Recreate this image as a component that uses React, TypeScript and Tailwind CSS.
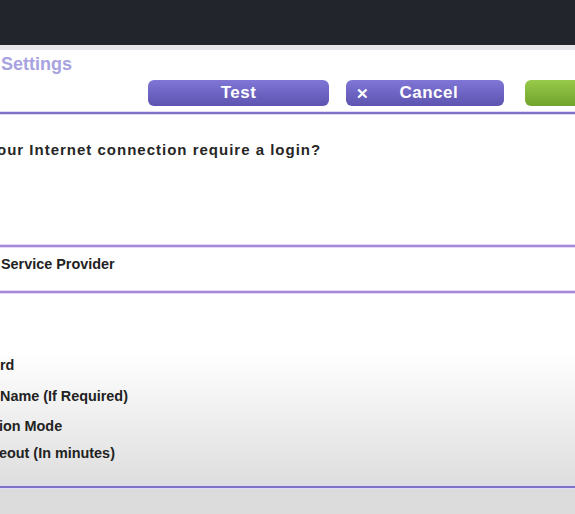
const font = { fontFamily: '"Liberation Sans", Arial, sans-serif' };

function Divider({ tone }: { tone: "dark" | "light" }) {
  return (
    <div className="flex flex-col">
      <div className="h-px bg-[#e4d9f4]" />
      <div className={tone === "dark" ? "h-[2px] bg-[#7e72c6]" : "h-[2px] bg-[#a58bd8]"} />
      <div className="h-px bg-[#e4d9f4]" />
    </div>
  );
}

export default function App() {
  return (
    <div style={font} className="w-[575px] h-[514px] overflow-hidden flex flex-col bg-white">
      <div className="h-[45px] bg-[#23252d]" />
      <div className="h-[5px] bg-[#e7e7eb]" />

      <div className="pt-[3px] text-[18px] leading-[22px] font-bold text-[#a7a2e0] pl-[1px]">Settings</div>

      <div className="mt-[5px] h-[26px] flex items-stretch">
        <button className="ml-[148px] w-[181px] rounded-[6px] bg-gradient-to-b from-[#7f76d6] to-[#5d53b0] text-white font-bold text-[17px] tracking-[0.5px]">
          Test
        </button>
        <button className="ml-[17px] w-[158px] rounded-[6px] bg-gradient-to-b from-[#7f76d6] to-[#5d53b0] text-white font-bold text-[17px] tracking-[0.5px] flex items-center">
          <span className="ml-[10px] text-[15px] leading-none">✕</span>
          <span className="ml-[30px]">Cancel</span>
        </button>
        <button className="ml-[21px] flex-1 rounded-l-[6px] bg-gradient-to-b from-[#98c94a] to-[#70a42c]" />
      </div>

      <div className="mt-[5px]">
        <Divider tone="dark" />
      </div>

      <div className="mt-[26px] -ml-[3px] text-[15px] leading-[18px] font-bold tracking-[1px] text-[#262626]">
        our Internet connection require a login?
      </div>

      <div className="mt-[85px]">
        <Divider tone="light" />
      </div>
      <div className="h-[42px] pt-[8px] pl-[1px] text-[14.4px] leading-[17px] font-bold text-[#222]">Service Provider</div>
      <Divider tone="light" />

      <div className="h-[191px] flex flex-col bg-gradient-to-b from-white from-[30%] to-[#dedede] text-[14.4px] leading-[17px] font-bold text-[#222]">
        <div className="mt-[63px]">rd</div>
        <div className="mt-[14px]">Name (If Required)</div>
        <div className="mt-[13px] -ml-[1px]">ion Mode</div>
        <div className="mt-[10px] -ml-[1px]">eout (In minutes)</div>
      </div>
      <Divider tone="dark" />
      <div className="flex-1 bg-[#dcdcdc]" />
    </div>
  );
}
